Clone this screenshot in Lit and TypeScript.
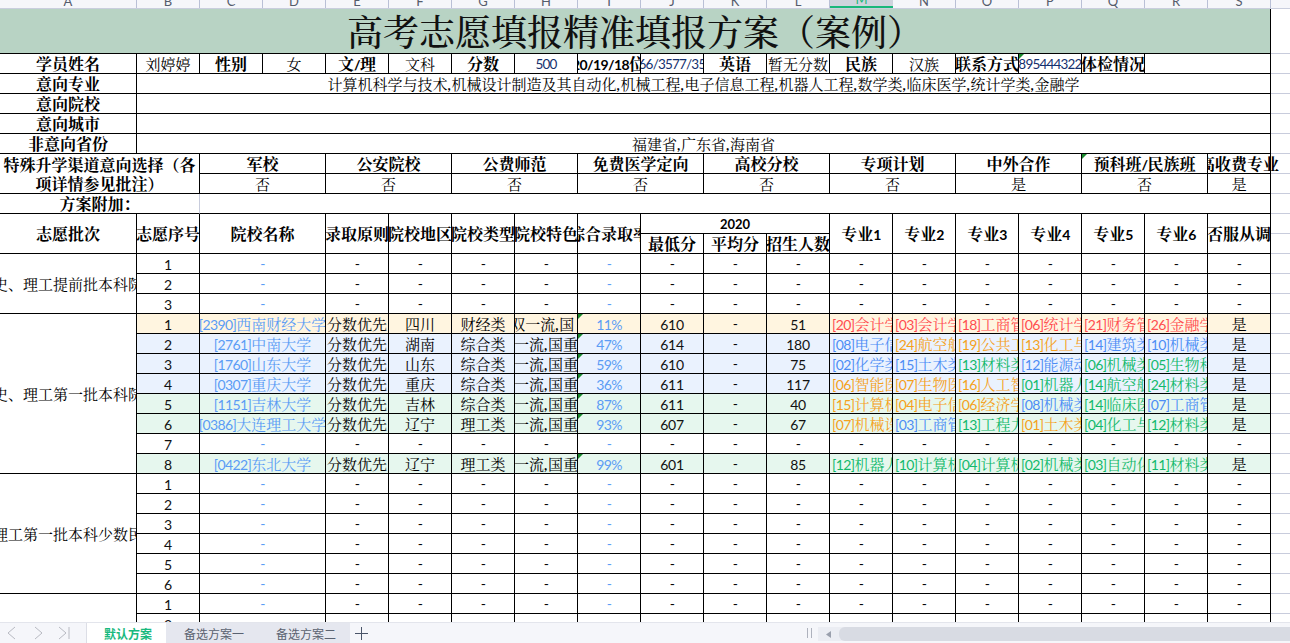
import { LitElement, html, css, nothing } from "lit";
import { customElement } from "lit/decorators.js";

type Opts = { c?: number; r?: number; cls?: string };

const LETTERS = "ABCDEFGHIJKLMNOPQRS".split("");

const rich = (t: string) =>
  t.split(/(,|[\x00-\x7f]+)/).filter(Boolean).map((p) =>
    p === "," ? html`<span class="cm">,</span>` : /^[\x00-\x7f]+$/.test(p) ? html`<span class="lat">${p}</span>` : p
  );

const cell = (t: string, o: Opts = {}) => {
  const st = o.c || o.r ? `grid-column:span ${o.c ?? 1};grid-row:span ${o.r ?? 1}` : nothing;
  return html`<div class="cell ${o.cls ?? ""}" style=${st}><span class="tx">${rich(t)}</span></div>`;
};
const gutter = () => html`<div class="gut"></div>`;

const PLANS = [
  { bg: "y", n: "[2390]西南财经大学", d: "四川", k: "财经类", f: "双一流,国\u00a0\u00a0", p: "11%", a: "610", e: "51",
    m: [["r", "[20]会计学"], ["r", "[03]会计学"], ["r", "[18]工商管理"], ["r", "[06]统计学"], ["r", "[21]财务管理"], ["r", "[26]金融学"]] },
  { bg: "b", n: "[2761]中南大学", d: "湖南", k: "综合类", f: "双一流,国重点", p: "47%", a: "614", e: "180",
    m: [["b", "[08]电子信息"], ["o", "[24]航空航天"], ["o", "[19]公共工程"], ["o", "[13]化工与制药"], ["b", "[14]建筑类"], ["b", "[10]机械类"]] },
  { bg: "b", n: "[1760]山东大学", d: "山东", k: "综合类", f: "双一流,国重点", p: "59%", a: "610", e: "75",
    m: [["b", "[02]化学类"], ["b", "[15]土木类"], ["g", "[13]材料类"], ["b", "[12]能源动力"], ["g", "[06]机械类"], ["g", "[05]生物科学"]] },
  { bg: "b", n: "[0307]重庆大学", d: "重庆", k: "综合类", f: "双一流,国重点", p: "36%", a: "611", e: "117",
    m: [["o", "[06]智能医学"], ["o", "[07]生物医学"], ["o", "[16]人工智能"], ["g", "[01]机器人"], ["g", "[14]航空航天"], ["g", "[24]材料类"]] },
  { bg: "g", n: "[1151]吉林大学", d: "吉林", k: "综合类", f: "双一流,国重点", p: "87%", a: "611", e: "40",
    m: [["o", "[15]计算机"], ["o", "[04]电子信息"], ["o", "[06]经济学"], ["b", "[08]机械类"], ["g", "[14]临床医学"], ["b", "[07]工商管理"]] },
  { bg: "g", n: "[0386]大连理工大学", d: "辽宁", k: "理工类", f: "双一流,国重点", p: "93%", a: "607", e: "67",
    m: [["o", "[07]机械设计"], ["b", "[03]工商管理"], ["g", "[13]工程力学"], ["o", "[01]土木类"], ["g", "[04]化工与制药"], ["g", "[12]材料类"]] },
  null,
  { bg: "g", n: "[0422]东北大学", d: "辽宁", k: "理工类", f: "双一流,国重点", p: "99%", a: "601", e: "85",
    m: [["g", "[12]机器人"], ["g", "[10]计算机"], ["g", "[04]计算机"], ["g", "[02]机械类"], ["g", "[03]自动化"], ["g", "[11]材料类"]] },
];

const emptyRow = (seq: number) => html`
  ${cell(String(seq), { cls: "num" })}
  ${cell("-", { c: 2, cls: "dash blue" })}
  ${[0, 1, 2, 3].map(() => cell("-", { cls: "dash" }))}
  ${cell("-", { cls: "dash blue" })}
  ${[0, 1, 2, 3, 4, 5, 6, 7, 8, 9].map(() => cell("-", { cls: "dash" }))}
  ${gutter()}`;

const planRow = (seq: number, p: (typeof PLANS)[number]) => {
  if (!p) return emptyRow(seq);
  const bg = "bg-" + p.bg;
  return html`
    ${cell(String(seq), { cls: `num ${bg}` })}
    ${cell(p.n, { c: 2, cls: `blue ${bg}` })}
    ${cell("分数优先", { cls: bg })}
    ${cell(p.d, { cls: bg })}
    ${cell(p.k, { cls: bg })}
    ${cell(p.f, { cls: bg })}
    ${cell(p.p, { cls: `blue flag ${bg}` })}
    ${cell(p.a, { cls: `num ${bg}` })}
    ${cell("-", { cls: `dash ${bg}` })}
    ${cell(p.e, { cls: `num ${bg}` })}
    ${p.m.map(([col, t]) => cell(t, { cls: `left ${col} ${bg}` }))}
    ${cell("是", { cls: bg })}
    ${gutter()}`;
};

@customElement("app-root")
export class AppRoot extends LitElement {
  static styles = css`
    :host {
      display: flex;
      flex-direction: column;
      width: 1290px;
      height: 643px;
      overflow: hidden;
      background: #fff;
      font-family: "Noto Serif CJK SC", "Noto Sans CJK SC", serif;
      color: #000;
    }
    .heads {
      display: grid;
      grid-template-columns: 137px repeat(18, 63px) 1fr;
      height: 9px;
      flex: none;
      overflow: hidden;
      background: #f5f6fa;
      border-bottom: 1px solid #c9cede;
      box-sizing: border-box;
    }
    .hd {
      display: flex;
      justify-content: center;
      align-items: flex-end;
      height: 8px;
      box-sizing: border-box;
      border-right: 1px solid #b9c0d6;
      font: 13px/1 "Lato", sans-serif;
      color: #555c6c;
      overflow: hidden;
    }
    .hd.on {
      background: #cfd3dd;
      border-right: 0;
      border-bottom: 2px solid #1ab77a;
      color: #1ab77a;
    }
    .hd span { display: block; }
    .grid {
      flex: 1;
      min-height: 0;
      overflow: hidden;
      display: grid;
      grid-template-columns: 137px repeat(18, 63px) 19px;
      grid-template-rows: 45px;
      grid-auto-rows: 20px;
      align-content: start;
    }
    .cell {
      position: relative;
      box-sizing: border-box;
      border-right: 1px solid #000;
      border-bottom: 1px solid #000;
      display: flex;
      align-items: center;
      justify-content: center;
      overflow: hidden;
      font-size: 15px;
      line-height: 19px;
      white-space: nowrap;
      min-width: 0;
    }
    .tx { flex: none; display: block; }
    .lat {
      font-family: "Lato", sans-serif;
      font-size: 14px;
      letter-spacing: -0.6px;
    }
    .cm {
      display: inline-block;
      width: 4px;
      font-family: "Lato", sans-serif;
      font-size: 14px;
      font-weight: 700;
    }
    .gut { border-bottom: 1px solid #c8ccdc; box-sizing: border-box; }
    .title {
      background: #b8d3c4;
      font-size: 36px;
      font-weight: 500;
      line-height: 44px;
      color: #111;
    }
    .h { font-size: 16px; font-weight: 700; }
    .h .lat { font-size: 14px; font-weight: 700; }
    .y2020 .lat { font-size: 13px; letter-spacing: 0; }
    .noR { border-right: 1px solid #c8ccdc; }
    .wrap { white-space: normal; text-align: center; }
    .wrap .tx { width: 199px; line-height: 19px; }
    .spill { overflow: visible; clip-path: inset(0 -20px 0 0); }
    .flag::before {
      content: "";
      position: absolute;
      left: 0;
      top: 0;
      border-top: 5px solid #1a8a2e;
      border-right: 5px solid transparent;
    }
    .num .lat { letter-spacing: -0.3px; color: #111; }
    .navy .lat { color: #14306e; font-size: 13.5px; letter-spacing: -0.8px; }
    .dash { font-size: 13px; }
    .blue, .blue .lat { color: #5b9cf5; }
    .r, .r .lat { color: #ff4d4f; }
    .o, .o .lat { color: #f5a11c; }
    .g, .g .lat { color: #12b96b; }
    .b, .b .lat { color: #4d8df5; }
    .left { justify-content: flex-start; padding-left: 2px; }
    .bg-y { background: #fff5e0; }
    .bg-b { background: #eaf2fe; }
    .bg-g { background: #e6f7ee; }
    .bar {
      flex: none;
      height: 21px;
      box-sizing: border-box;
      border-top: 1px solid #e3e5ec;
      background: #f5f6fa;
      display: flex;
      align-items: stretch;
      font-family: "Noto Sans CJK SC", sans-serif;
      font-size: 12px;
    }
    .nav {
      width: 87px;
      box-sizing: border-box;
      border-right: 1px solid #dcdee6;
      display: flex;
      align-items: center;
      gap: 12px;
      padding-left: 5px;
      flex: none;
    }
    .nav svg { display: block; fill: none; stroke: #b8bac2; stroke-width: 1; }
    .tab {
      display: flex;
      align-items: center;
      justify-content: center;
      flex: none;
      box-sizing: border-box;
      padding-left: 4px;
      color: #5a6270;
      background: #e5e7ef;
      width: 92px;
    }
    .tab:last-of-type { width: 93px; }
    .tab.on { background: #fff; color: #18b97e; font-weight: 700; width: 79px; padding-left: 3px; }
    .plus { width: 23px; flex: none; display: flex; align-items: center; justify-content: center; }
    .plus svg { stroke: #4a5568; stroke-width: 1; fill: none; }
    .sp { flex: 1; }
    .split { width: 3px; height: 10px; margin: 5px 6px 0 0; border-left: 1px solid #aeb2bd; border-right: 1px solid #aeb2bd; flex: none; }
    .sb {
      width: 21px; flex: none; background: #ebedf3; margin: 4px 0 2px 0;
      display: flex; align-items: center; justify-content: center;
    }
    .sb svg { fill: #9aa0ad; }
    .thumb { width: 451px; flex: none; background: #ebedf3; margin: 4px 0 2px 0; }
    .thumb div { height: 100%; background: #d8dbe3; border-radius: 6px 0 0 6px; }
  `;

  render() {
    return html`
      <div class="heads">
        ${LETTERS.map((l) => html`<div class="hd ${l === "M" ? "on" : ""}"><span>${l}</span></div>`)}
      </div>
      <div class="grid">
        ${cell("高考志愿填报精准填报方案（案例）", { c: 19, cls: "title" })}
        ${gutter()}

        ${cell("学员姓名", { cls: "h" })}
        ${cell("刘婷婷")}
        ${cell("性别", { cls: "h" })}
        ${cell("女")}
        ${cell("文/理", { cls: "h" })}
        ${cell("文科")}
        ${cell("分数", { cls: "h" })}
        ${cell("500", { cls: "navy" })}
        ${cell("2020/19/18位次", { cls: "h" })}
        ${cell("3566/3577/3512", { cls: "navy" })}
        ${cell("英语", { cls: "h" })}
        ${cell("暂无分数")}
        ${cell("民族", { cls: "h" })}
        ${cell("汉族")}
        ${cell("联系方式", { cls: "h" })}
        ${cell("895444322", { cls: "navy flag" })}
        ${cell("体检情况", { cls: "h" })}
        ${cell("", { c: 2 })}
        ${gutter()}

        ${cell("意向专业", { cls: "h" })}
        ${cell("计算机科学与技术,机械设计制造及其自动化,机械工程,电子信息工程,机器人工程,数学类,临床医学,统计学类,金融学", { c: 18 })}
        ${gutter()}
        ${cell("意向院校", { cls: "h" })}
        ${cell("", { c: 18 })}
        ${gutter()}
        ${cell("意向城市", { cls: "h" })}
        ${cell("", { c: 18 })}
        ${gutter()}
        ${cell("非意向省份", { cls: "h" })}
        ${cell("福建省,广东省,海南省", { c: 18 })}
        ${gutter()}

        ${cell("特殊升学渠道意向选择（各项详情参见批注）", { c: 2, r: 2, cls: "h wrap" })}
        ${cell("军校", { c: 2, cls: "h" })}
        ${cell("公安院校", { c: 2, cls: "h" })}
        ${cell("公费师范", { c: 2, cls: "h" })}
        ${cell("免费医学定向", { c: 2, cls: "h" })}
        ${cell("高校分校", { c: 2, cls: "h" })}
        ${cell("专项计划", { c: 2, cls: "h" })}
        ${cell("中外合作", { c: 2, cls: "h" })}
        ${cell("预科班/民族班", { c: 2, cls: "h flag" })}
        ${cell("高收费专业", { cls: "h spill" })}
        ${gutter()}
        ${["否", "否", "否", "否", "否", "否", "是", "否"].map((t) => cell(t, { c: 2 }))}
        ${cell("是")}
        ${gutter()}

        ${cell("方案附加：", { c: 2, cls: "h noR" })}
        ${cell("", { c: 17 })}
        ${gutter()}

        ${cell("志愿批次", { r: 2, cls: "h" })}
        ${cell("志愿序号", { r: 2, cls: "h" })}
        ${cell("院校名称", { c: 2, r: 2, cls: "h" })}
        ${["录取原则", "院校地区", "院校类型", "院校特色", "综合录取率"].map((t) => cell(t, { r: 2, cls: "h" }))}
        ${cell("2020", { c: 3, cls: "h y2020" })}
        ${["专业1", "专业2", "专业3", "专业4", "专业5", "专业6", "是否服从调剂"].map((t) => cell(t, { r: 2, cls: "h" }))}
        ${gutter()}
        ${["最低分", "平均分", "招生人数"].map((t) => cell(t, { cls: "h" }))}
        ${gutter()}

        ${cell("文史、理工提前批本科院校", { r: 3 })}
        ${[1, 2, 3].map((s) => emptyRow(s))}
        ${cell("文史、理工第一批本科院校", { r: 8 })}
        ${PLANS.map((p, i) => planRow(i + 1, p))}
        ${cell("文史、理工第一批本科少数民族预科", { r: 6 })}
        ${[1, 2, 3, 4, 5, 6].map((s) => emptyRow(s))}
        ${cell("", { r: 2 })}
        ${[1, 2].map((s) => emptyRow(s))}
      </div>
      <div class="bar">
        <div class="nav">
          <svg width="14" height="14" viewBox="0 0 14 14"><path d="M10 1 3 7l7 6" /></svg>
          <svg width="14" height="14" viewBox="0 0 14 14"><path d="M4 1l7 6-7 6" /></svg>
          <svg width="14" height="14" viewBox="0 0 14 14"><path d="M2 1l7 6-7 6M12 1v12" /></svg>
        </div>
        <div class="tab on">默认方案</div>
        <div class="tab">备选方案一</div>
        <div class="tab">备选方案二</div>
        <div class="plus">
          <svg width="13" height="13" viewBox="0 0 13 13"><path d="M6.5 0v13M0 6.5h13" /></svg>
        </div>
        <div class="sp"></div>
        <div class="split"></div>
        <div class="sb"><svg width="5" height="7" viewBox="0 0 5 7"><path d="M5 0v7L0 3.5z" /></svg></div>
        <div class="thumb"><div></div></div>
      </div>
    `;
  }
}
